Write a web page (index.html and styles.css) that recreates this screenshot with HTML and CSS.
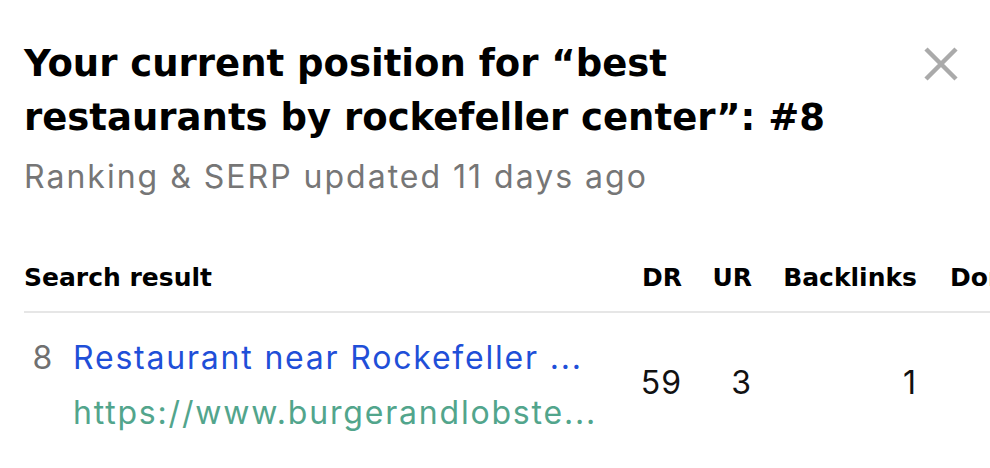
FILE: index.html
```html
<!DOCTYPE html>
<html lang="en">
<head>
    <meta charset="UTF-8">
    <meta name="viewport" content="width=device-width, initial-scale=1.0">
    <title>Current position</title>
    <link rel="stylesheet" href="styles.css">
</head>
<body>
    <div class="popup">
        <!-- Cabecera -->
        <div class="popup-head">
            <h1 class="popup-title">Your current position for “best restaurants by rockefeller center”: #8</h1>
            <button class="close-btn" aria-label="Close">
                <svg width="34" height="34" viewBox="0 0 34 34">
                    <path d="M2 2 L32 32 M32 2 L2 32" stroke="#aaaaaa" stroke-width="4.5" fill="none"/>
                </svg>
            </button>
        </div>
        <p class="updated">Ranking &amp; SERP updated 11 days ago</p>

        <!-- Tabla SERP -->
        <table class="serp">
            <thead>
                <tr>
                    <th class="col-result">Search result</th>
                    <th class="col-num col-dr">DR</th>
                    <th class="col-num col-ur">UR</th>
                    <th class="col-num col-bl">Backlinks</th>
                    <th class="col-dom">Domains</th>
                </tr>
            </thead>
            <tbody>
                <tr>
                    <td class="col-result">
                        <div class="result">
                            <span class="rank">8</span>
                            <div class="result-text">
                                <a class="result-title" href="#">Restaurant near Rockefeller ...</a>
                                <div class="result-url">https://www.burgerandlobste...</div>
                            </div>
                        </div>
                    </td>
                    <td class="col-num">59</td>
                    <td class="col-num">3</td>
                    <td class="col-num">1</td>
                    <td class="col-dom"></td>
                </tr>
            </tbody>
        </table>
    </div>
</body>
</html>
```

FILE: styles.css
```css
body {
    font-family: Inter, "Noto Sans", sans-serif;
    background-color: #fff;
    margin: 0;
    color: #111;
    overflow: hidden;
}
.popup {
    padding: 37px 0 0 24px;
}
.popup-head {
    display: flex;
    justify-content: space-between;
    align-items: flex-start;
}
.popup-title {
    margin: 0;
    max-width: 850px;
    font-family: "DejaVu Sans", sans-serif;
    font-size: 37px;
    line-height: 54px;
    font-weight: 700;
    color: #000;
}
.close-btn {
    background: none;
    border: none;
    padding: 0;
    margin: 10px 32px 0 0;
    cursor: pointer;
}
.close-btn svg {
    display: block;
}
.updated {
    margin: 12px 0 0;
    font-size: 32px;
    line-height: 40px;
    letter-spacing: 2px;
    color: #767676;
}
.serp {
    margin-top: 65px;
    border-collapse: collapse;
    table-layout: fixed;
    width: 1100px;
}
.serp th {
    font-family: "DejaVu Sans", sans-serif;
    font-size: 25px;
    line-height: 32px;
    font-weight: 700;
    color: #000;
    text-align: left;
    padding: 0 0 17px;
    border-bottom: 2px solid #e6e6e6;
    white-space: nowrap;
}
.serp td {
    padding: 17px 0 0;
    font-size: 32px;
    line-height: 55px;
    letter-spacing: 1.8px;
    vertical-align: middle;
}
.serp .col-num {
    text-align: right;
}
.serp td.col-num {
    letter-spacing: 1px;
    padding-bottom: 6px;
}
.col-result {
    width: 588px;
}
.col-dr, .col-ur {
    width: 70px;
}
.col-bl {
    width: 165px;
}
.serp th.col-dom {
    padding-left: 33px;
}
.result {
    display: flex;
    gap: 19px;
}
.rank {
    width: 30px;
    text-align: right;
    color: #707070;
}
.result-title {
    color: #1f4fd8;
    text-decoration: none;
}
.result-url {
    color: #52a58c;
}
```
